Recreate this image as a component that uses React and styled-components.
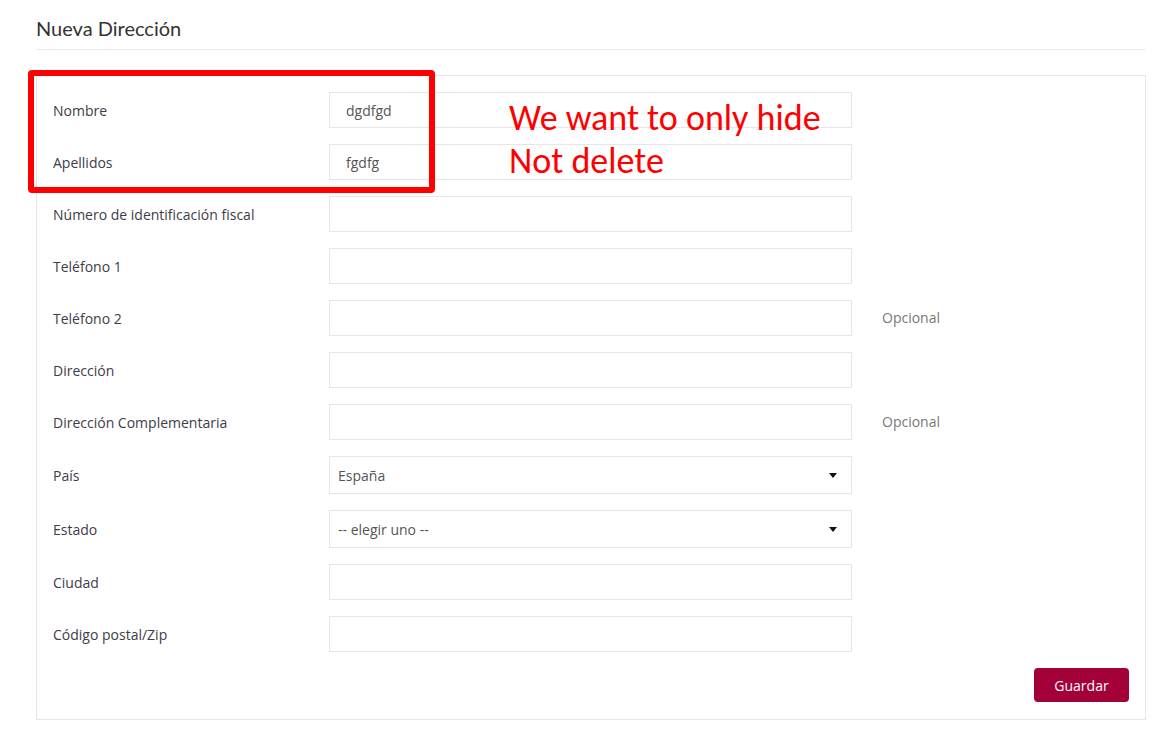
import styled, { createGlobalStyle } from "styled-components";

const GlobalStyle = createGlobalStyle`
    body {
        margin: 0;
        background: #fff;
        font-family: "Open Sans", "Liberation Sans", sans-serif;
    }
`;

const fields = [
    { label: "Nombre", value: "dgdfgd" },
    { label: "Apellidos", value: "fgdfg" },
    { label: "Número de identificación fiscal" },
    { label: "Teléfono 1" },
    { label: "Teléfono 2", help: "Opcional" },
    { label: "Dirección" },
    { label: "Dirección Complementaria", help: "Opcional" },
    { label: "País", select: "España" },
    { label: "Estado", select: "-- elegir uno --" },
    { label: "Ciudad" },
    { label: "Código postal/Zip" },
];

const App = () => {
    return (
        <>
            <GlobalStyle />
            <Page>
                <Title>Nueva Dirección</Title>
                <Panel>
                    {fields.map((f) => (
                        <Row key={f.label}>
                            <Label>{f.label}</Label>
                            {f.select ? (
                                <Select>
                                    <span>{f.select}</span>
                                    <Caret />
                                </Select>
                            ) : (
                                <Input defaultValue={f.value || ""} />
                            )}
                            {f.help && <Help>{f.help}</Help>}
                        </Row>
                    ))}
                    <Footer>
                        <SaveButton>Guardar</SaveButton>
                    </Footer>
                </Panel>

                <Highlight />
                <Note>
                    We want to only hide
                    <br />
                    Not delete
                </Note>
            </Page>
        </>
    );
};

export default App;

/* ================= styles ================= */

const Page = styled.div`
    position: relative;
    margin: 0 16px 0 36px;
    padding-top: 16px;
`;

const Title = styled.div`
    font-family: Lato, "Open Sans", sans-serif;
    font-size: 20px;
    color: #333;
    padding-bottom: 9px;
    border-bottom: 1px solid #eaeaea;
    margin-bottom: 25px;
`;

const Panel = styled.div`
    border: 1px solid #e6e6e6;
    padding: 16px 16px 17px;
    display: flex;
    flex-direction: column;
    gap: 16px;
`;

const Row = styled.div`
    display: grid;
    grid-template-columns: 246px 523px auto;
    column-gap: 30px;
    align-items: center;
`;

const Label = styled.div`
    font-size: 14px;
    color: #403c48;
`;

const Input = styled.input`
    box-sizing: border-box;
    height: 36px;
    width: 100%;
    border: 1px solid #e6e6e6;
    padding: 0 16px;
    font-family: "Open Sans", sans-serif;
    font-size: 14px;
    color: #555;
    outline: none;
    background: #fff;
`;

const Select = styled.div`
    box-sizing: border-box;
    height: 38px;
    border: 1px solid #e6e6e6;
    padding: 0 14px 0 8px;
    display: flex;
    align-items: center;
    justify-content: space-between;
    font-size: 14px;
    color: #555;
`;

const Caret = styled.span`
    width: 0;
    height: 0;
    border-left: 4px solid transparent;
    border-right: 4px solid transparent;
    border-top: 5px solid #111;
    margin-top: 1px;
`;

const Help = styled.div`
    font-size: 14px;
    color: #777;
    margin-top: -2px;
`;

const Footer = styled.div`
    display: flex;
    justify-content: flex-end;
`;

const SaveButton = styled.button`
    height: 34px;
    width: 95px;
    border: none;
    border-radius: 4px;
    background: #a3003a;
    color: #fff;
    font-family: "Open Sans", sans-serif;
    font-size: 14px;
`;

const Highlight = styled.div`
    position: absolute;
    left: -8px;
    top: 70px;
    width: 407px;
    height: 123px;
    box-sizing: border-box;
    border: 6px solid #ff0000;
    border-radius: 4px;
    pointer-events: none;
`;

const Note = styled.div`
    position: absolute;
    left: 473px;
    top: 97px;
    font-family: Carlito, Lato, sans-serif;
    font-size: 36px;
    line-height: 43px;
    color: #ff0000;
`;
